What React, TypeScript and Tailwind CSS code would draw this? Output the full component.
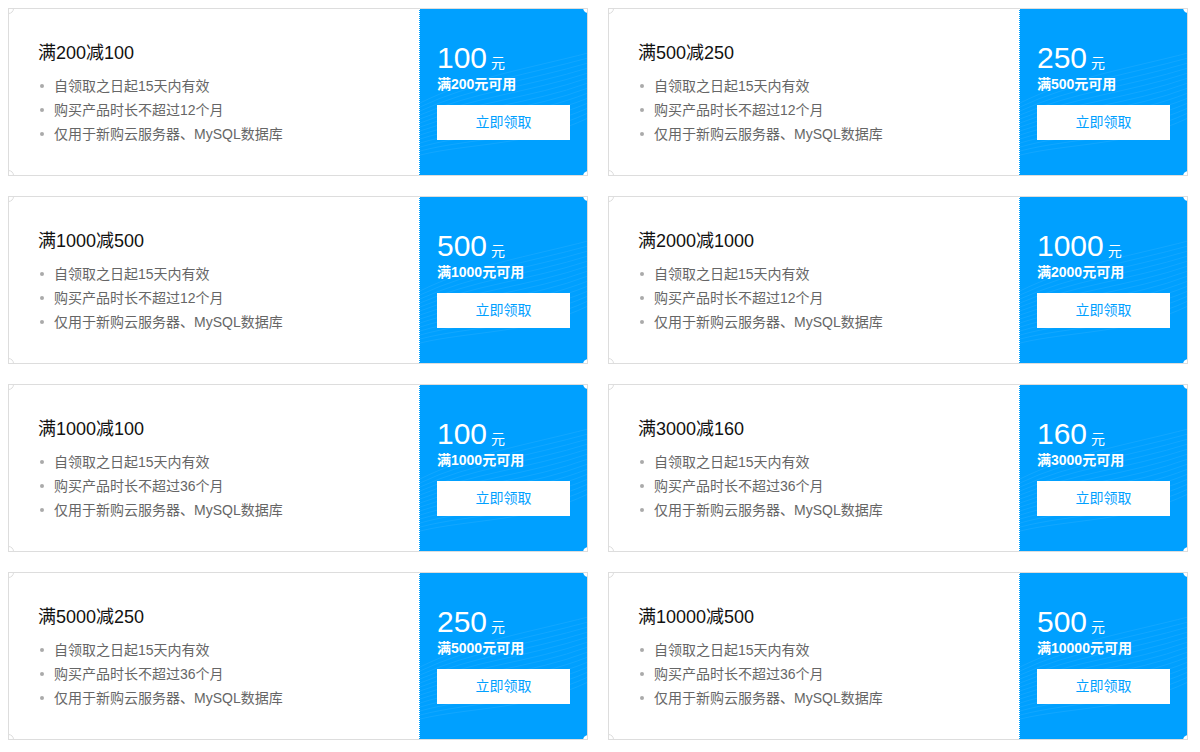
const coupons = [
  { title: '满200减100', amount: '100', cond: '满200元可用', months: 12 },
  { title: '满500减250', amount: '250', cond: '满500元可用', months: 12 },
  { title: '满1000减500', amount: '500', cond: '满1000元可用', months: 12 },
  { title: '满2000减1000', amount: '1000', cond: '满2000元可用', months: 12 },
  { title: '满1000减100', amount: '100', cond: '满1000元可用', months: 36 },
  { title: '满3000减160', amount: '160', cond: '满3000元可用', months: 36 },
  { title: '满5000减250', amount: '250', cond: '满5000元可用', months: 36 },
  { title: '满10000减500', amount: '500', cond: '满10000元可用', months: 36 },
]

function Waves() {
  return (
    <svg className="absolute inset-0 w-full h-full pointer-events-none" viewBox="0 0 168 168" preserveAspectRatio="none">
      {Array.from({ length: 14 }).map((_, i) => (
        <path
          key={i}
          d={`M0 ${95 + i * 4} C 50 ${70 + i * 5}, 110 ${60 + i * 6}, 168 ${45 + i * 5}`}
          fill="none"
          stroke="white"
          strokeOpacity="0.07"
          strokeWidth="1"
        />
      ))}
    </svg>
  )
}

function Coupon({ c }: { c: (typeof coupons)[number] }) {
  return (
    <div className="relative flex h-[168px] border border-[#dddddd] bg-white overflow-hidden">
      <div className="absolute -left-[6px] -top-[6px] w-[11px] h-[11px] rounded-full bg-white border border-[#dddddd] z-10" />
      <div className="absolute -left-[6px] -bottom-[6px] w-[11px] h-[11px] rounded-full bg-white border border-[#dddddd] z-10" />
      <div className="flex-1 pl-[29px] pt-[32px]">
        <div className="text-[18px] leading-[24px] text-[#111]">{c.title}</div>
        <ul className="mt-[9px] text-[14px] leading-[24px] text-[#666]">
          {['自领取之日起15天内有效', `购买产品时长不超过${c.months}个月`, '仅用于新购云服务器、MySQL数据库'].map(t => (
            <li key={t} className="flex items-center">
              <span className="w-[4px] h-[4px] rounded-full bg-[#aaa] ml-[2px] mr-[10px]" />
              {t}
            </li>
          ))}
        </ul>
      </div>
      <div className="relative -my-px -mr-px w-[169px] bg-[#00a0ff] border-l border-dotted border-white overflow-hidden">
        <Waves />
        <div className="absolute -right-[6px] -top-[6px] w-[11px] h-[11px] rounded-full bg-white" />
        <div className="absolute -right-[6px] -bottom-[6px] w-[11px] h-[11px] rounded-full bg-white" />
        <div className="relative pl-[17px] pt-[35px] text-white">
          <div className="flex items-baseline h-[30px]">
            <span className="text-[30px] leading-[30px]">{c.amount}</span>
            <span className="text-[14px] leading-[14px] ml-[4px]">元</span>
          </div>
          <div className="mt-[2px] text-[14px] leading-[18px] font-bold">{c.cond}</div>
          <button className="mt-[12px] w-[133px] h-[35px] bg-white text-[#00a0ff] text-[14px]">立即领取</button>
        </div>
      </div>
    </div>
  )
}

export default function App() {
  return (
    <div className="w-[1200px] h-[752px] bg-white px-[8px] pt-[8px] font-[Liberation_Sans,Noto_Sans_CJK_SC,sans-serif]">
      <div className="w-[1180px] grid grid-cols-2 gap-x-[20px] gap-y-[20px]">
        {coupons.map(c => <Coupon key={c.title} c={c} />)}
      </div>
    </div>
  )
}
